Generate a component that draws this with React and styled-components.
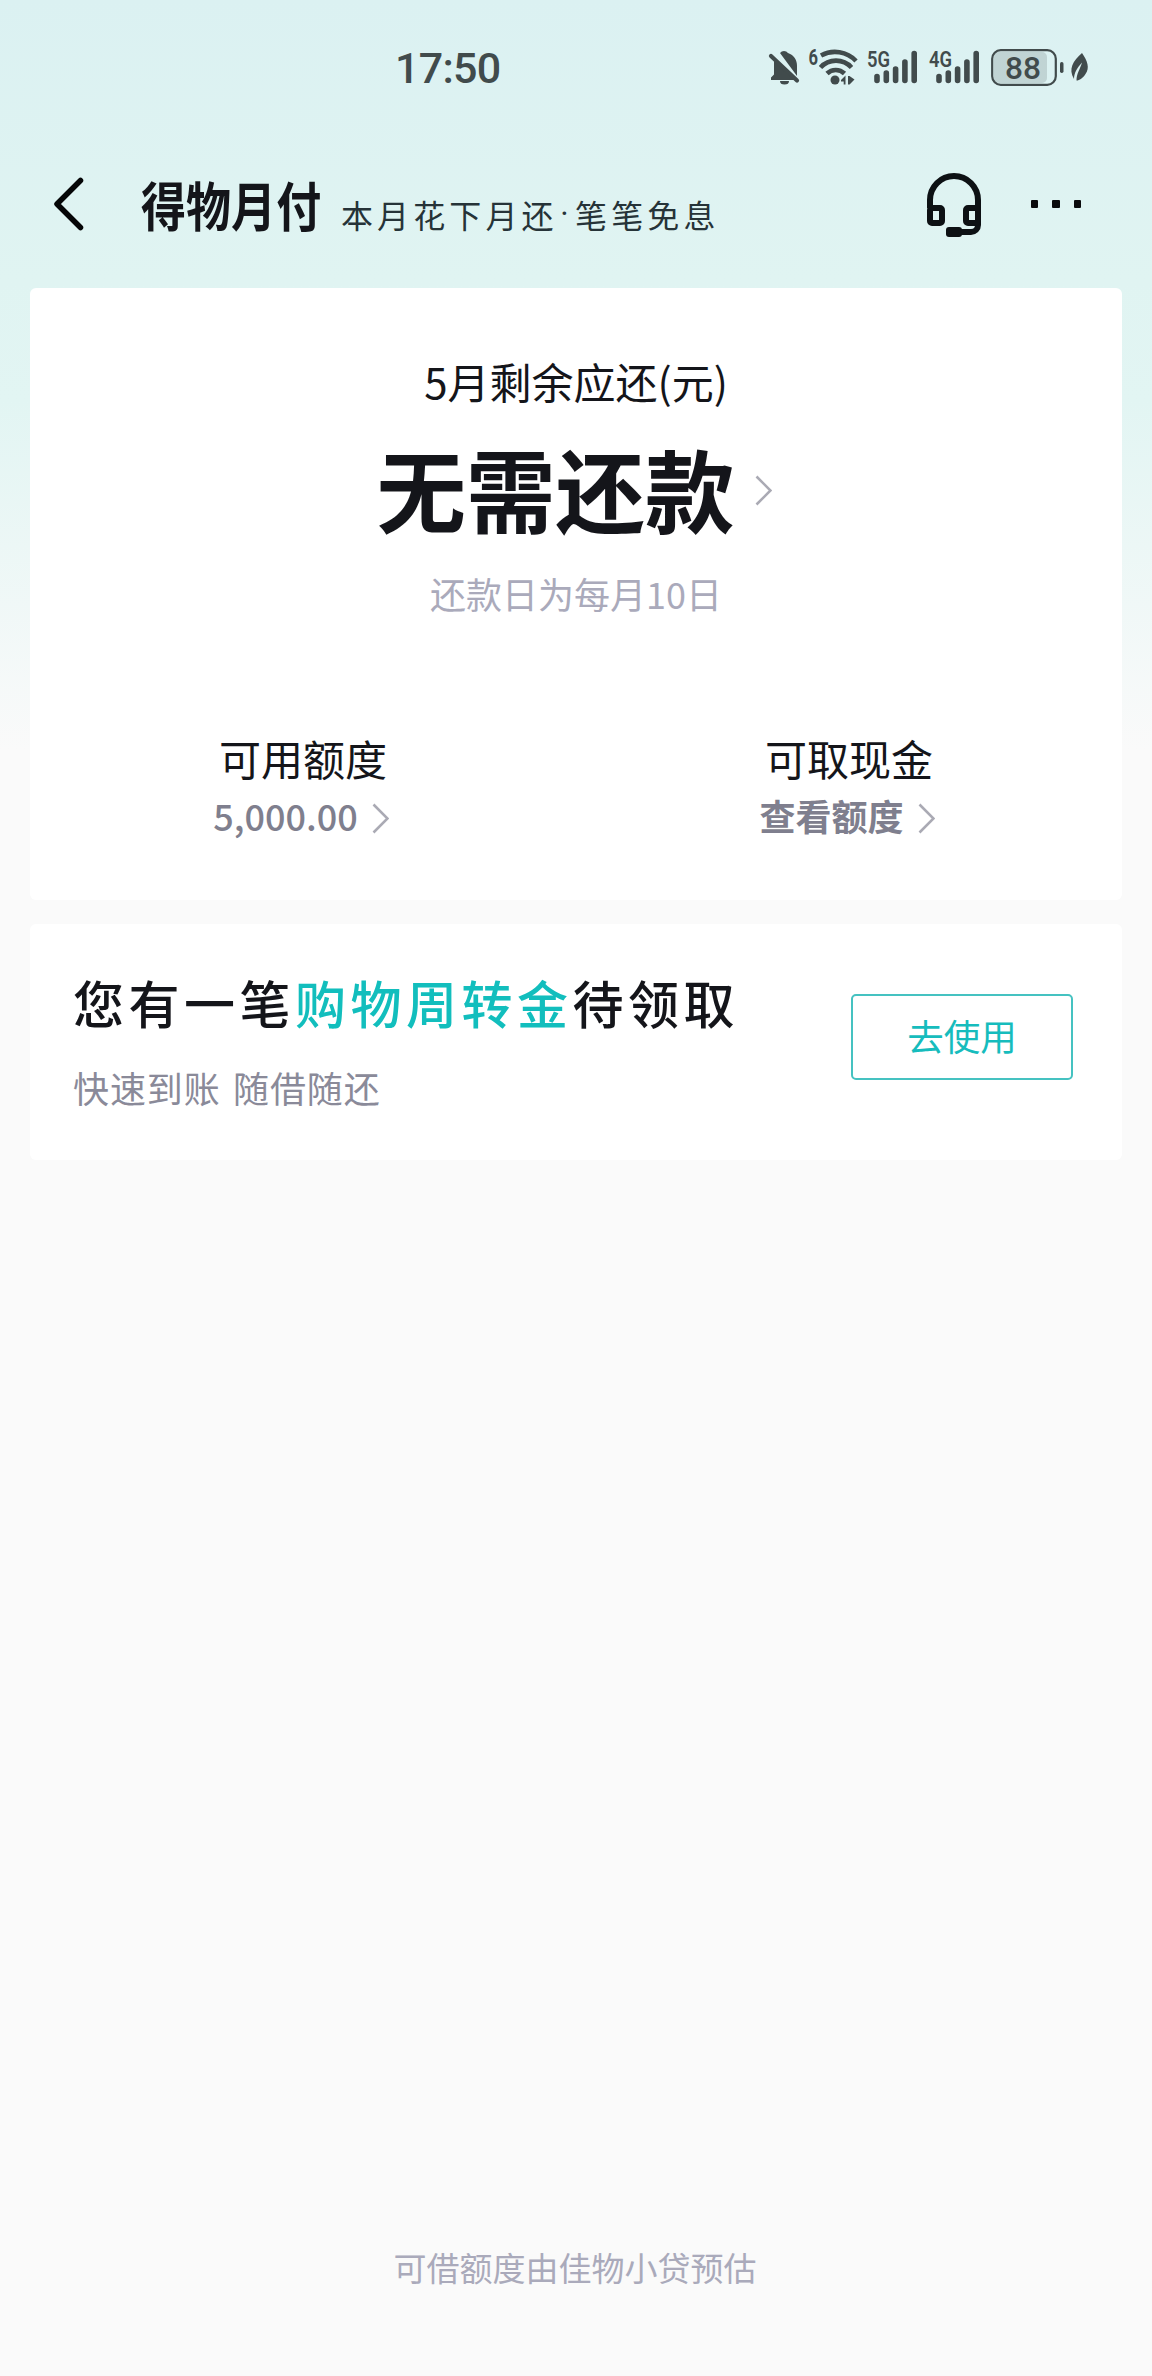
import React from "react";
import styled, { createGlobalStyle } from "styled-components";

const Global = createGlobalStyle`
  * { box-sizing: border-box; }
  body { margin: 0; background: #fafafa; }
`;

const Page = styled.div`
  width: 1152px;
  height: 2376px;
  display: flex;
  flex-direction: column;
  color: #14151a;
  font-family: "Noto Sans CJK SC", sans-serif;
  background: linear-gradient(180deg, #dbf1f2 0px, #e0f4f2 280px, #e2f5f3 400px, #fafafa 750px, #fafafa 100%);
`;

const StatusBar = styled.header`
  height: 136px;
  padding: 0 60px 0 395px;
  display: flex;
  align-items: center;
  justify-content: space-between;
  color: #414b4c;
`;

const Clock = styled.time`
  font: 500 43px/50px Roboto, sans-serif;
  letter-spacing: -0.7px;
`;

const StatusIcons = styled.svg`
  width: 328px;
  height: 48px;
  font-family: Roboto, sans-serif;
`;

const NavBar = styled.nav`
  height: 152px;
  padding: 0 71px 0 52px;
  display: flex;
  align-items: center;
`;

const BackIcon = styled.svg`
  width: 34px;
  height: 56px;
  margin-bottom: 16px;
`;

const Brand = styled.h1`
  width: 180px;
  margin: 0 0 16px 55px;
  font-size: 53px;
  line-height: 60px;
  font-weight: 700;
  white-space: nowrap;
`;

const BrandText = styled.span`
  display: inline-block;
  transform: scaleX(0.85);
  transform-origin: 0 50%;
`;

const Slogan = styled.p`
  display: flex;
  margin: 4px 0 0 20px;
  flex: 1;
  font-size: 32px;
  line-height: 48px;
  letter-spacing: 4.1px;
  font-weight: 400;
  color: #263338;
  white-space: nowrap;
`;

const Dot = styled.span`
  display: flex;
  justify-content: center;
  width: 17.5px;
  padding-right: 4px;
  letter-spacing: 0;
  font-family: Roboto, sans-serif;
`;

const SupportIcon = styled.svg`
  width: 56px;
  height: 64px;
  margin-bottom: 14px;
`;

const More = styled.div`
  display: flex;
  gap: 14px;
  margin: 0 0 16px 49px;
`;

const MoreDot = styled.i`
  width: 7.5px;
  height: 7.5px;
  border-radius: 1px;
  background: #0a0b0d;
`;

const Content = styled.main`
  flex: 1;
  padding: 0 30px;
  display: flex;
  flex-direction: column;
  gap: 24px;
`;

const Card = styled.section`
  height: ${(p) => p.$height}px;
  border-radius: 6px;
  background: #fff;
`;

const Repay = styled.div`
  height: 419px;
  padding-top: 63px;
  display: flex;
  flex-direction: column;
  align-items: center;
`;

const Label = styled.div`
  font-size: 42px;
  line-height: 60px;
`;

const Amount = styled.div`
  display: flex;
  align-items: center;
  gap: 20px;
  margin-top: 11px;
  padding-right: 4px;
  font-size: 89.5px;
  line-height: 130px;
  font-weight: 700;
`;

const Due = styled.div`
  margin-top: 15px;
  font-size: 36px;
  line-height: 52px;
  color: #aaaabb;
`;

const Chevron = styled.svg`
  width: 17px;
  height: 31px;
  margin-top: ${(p) => p.$drop}px;
  fill: none;
  stroke: #aaaab4;
  stroke-width: 2.6;
`;

const Quotas = styled.div`
  display: grid;
  grid-template-columns: 1fr 1fr;
`;

const Quota = styled.div`
  display: flex;
  flex-direction: column;
  align-items: center;
  padding-top: 21px;
`;

const QuotaValue = styled.div`
  display: flex;
  align-items: center;
  gap: 14px;
  margin-top: -1px;
  padding-right: 4px;
  font-size: 36px;
  line-height: 56px;
  font-weight: ${(p) => p.$weight};
  color: #7f7f8e;
`;

const Offer = styled.div`
  height: 100%;
  padding: 0 49px 0 43px;
  display: flex;
  align-items: center;
  justify-content: space-between;
`;

const OfferTitle = styled.h2`
  margin: 0;
  font-size: 51px;
  line-height: 76px;
  font-weight: 500;
  letter-spacing: 4.5px;
`;

const Accent = styled.span`
  color: #12bebd;
`;

const OfferNote = styled.p`
  margin: 20px 0 7px;
  font-size: 36px;
  line-height: 54px;
  letter-spacing: 0.9px;
  word-spacing: 3.5px;
  color: #8a8a99;
`;

const UseButton = styled.button`
  width: 222px;
  height: 86px;
  margin-bottom: 10px;
  padding: 0 0 2px;
  border: 2px solid #45c2c1;
  border-radius: 5px;
  background: #fff;
  color: #16bcbd;
  font: 400 36.5px/50px "Noto Sans CJK SC", sans-serif;
`;

const Footer = styled.footer`
  height: 134px;
  padding-right: 2px;
  text-align: center;
  font-size: 33px;
  line-height: 50px;
  color: #aaaabb;
`;

const Arrow = ({ drop = 0 }) => (
  <Chevron viewBox="0 0 17 31" $drop={drop}>
    <path d="M1.5 1.5 L15.5 15.5 L1.5 29.5" />
  </Chevron>
);

const SignalBars = ({ x }) => (
  <g stroke="currentColor" strokeWidth="5.6" strokeLinecap="round">
    <path d={`M${x} 32.5v4 M${x + 9.3} 29v7.5 M${x + 18.6} 25v11.5 M${x + 27.9} 18v18.5 M${x + 37.2} 9.5v27`} />
  </g>
);

const quotas = [
  { label: "可用额度", value: "5,000.00", weight: 500 },
  { label: "可取现金", value: "查看额度", weight: 700 },
];

export default function App() {
  return (
    <Page>
      <Global />
      <StatusBar>
        <Clock>17:50</Clock>
        <StatusIcons viewBox="764 44 328 48" fill="currentColor">
          <g>
            <path d="M780 53a5 5 0 0 1 8 0c6 2 9 7 9 13v10z" />
            <path d="M774 60l21 20H771v-2.500l3-3z" />
            <path d="M780 81h9a4.500 3.500 0 0 1-9 0z" />
            <path d="M771 56l26 24.500" stroke="currentColor" strokeWidth="4.200" strokeLinecap="round" />
          </g>
          <text x="808.500" y="65" fontSize="22" fontWeight="700" textLength="9.500" lengthAdjust="spacingAndGlyphs">6</text>
          <g fill="none" stroke="currentColor" strokeWidth="4.600">
            <path d="M821 55.500a29 29 0 0 1 35 5.500" />
            <path d="M820.500 67.500a21 21 0 0 1 31 0" />
            <path d="M827 73.500a12.500 12.500 0 0 1 17.500 0" />
          </g>
          <circle cx="835" cy="80" r="4.500" />
          <path d="M841 80l4.500-4.500v9h-1.800V81.500H841zM848 76h1.500l5 3.500-5 5H848z" />
          <text x="867" y="66.500" fontSize="22" fontWeight="600" textLength="23" lengthAdjust="spacingAndGlyphs">5G</text>
          <g transform="translate(0 44)"><SignalBars x={877} /></g>
          <text x="929" y="66.500" fontSize="22" fontWeight="600" textLength="23" lengthAdjust="spacingAndGlyphs">4G</text>
          <g transform="translate(0 44)"><SignalBars x={939} /></g>
          <rect x="994" y="52" width="53" height="31" rx="5" opacity="0.18" />
          <rect x="992.200" y="50.200" width="63.600" height="34.600" rx="8.500" fill="none" stroke="currentColor" strokeWidth="2.200" />
          <text x="1005" y="78.500" fontSize="31" fontWeight="500" textLength="36" lengthAdjust="spacingAndGlyphs">88</text>
          <rect x="1060" y="62" width="3.500" height="11" rx="1.700" />
          <path d="M1082 53c5.500 8 8 15 3.500 21-2.500 4-6 6.500-9 6.500 0-7 3.500-11 5.500-18-4.500 5-8 10-8 16.500-6-10-1-18 8-26z" />
        </StatusIcons>
      </StatusBar>
      <NavBar>
        <BackIcon viewBox="0 0 34 56" fill="none" stroke="#050607" strokeWidth="5.500" strokeLinecap="round" strokeLinejoin="round">
          <path d="M28.500 4.500L5 28l23.500 23.500" />
        </BackIcon>
        <Brand><BrandText>得物月付</BrandText></Brand>
        <Slogan>
          <span>本月花下月还</span>
          <Dot>·</Dot>
          <span>笔笔免息</span>
        </Slogan>
        <SupportIcon viewBox="926 172 56 64" fill="none" stroke="#0d1114" strokeWidth="6">
          <path d="M930 207V199a24 24 0 0 1 48 0V224a7 7 0 0 1-7 7H960" />
          <rect x="930" y="207" width="12" height="15" rx="2" />
          <rect x="966" y="207" width="12" height="15" rx="2" />
          <rect x="946" y="226" width="16" height="10" rx="3" fill="#0d1114" stroke="none" />
        </SupportIcon>
        <More><MoreDot /><MoreDot /><MoreDot /></More>
      </NavBar>
      <Content>
        <Card $height={612}>
          <Repay>
            <Label>5月剩余应还(元)</Label>
            <Amount>无需还款<Arrow drop={6} /></Amount>
            <Due>还款日为每月10日</Due>
          </Repay>
          <Quotas>
            {quotas.map((q) => (
              <Quota key={q.label}>
                <Label>{q.label}</Label>
                <QuotaValue $weight={q.weight}>{q.value}<Arrow drop={6} /></QuotaValue>
              </Quota>
            ))}
          </Quotas>
        </Card>
        <Card $height={236}>
          <Offer>
            <div>
              <OfferTitle>您有一笔<Accent>购物周转金</Accent>待领取</OfferTitle>
              <OfferNote>快速到账 随借随还</OfferNote>
            </div>
            <UseButton>去使用</UseButton>
          </Offer>
        </Card>
      </Content>
      <Footer>可借额度由佳物小贷预估</Footer>
    </Page>
  );
}
